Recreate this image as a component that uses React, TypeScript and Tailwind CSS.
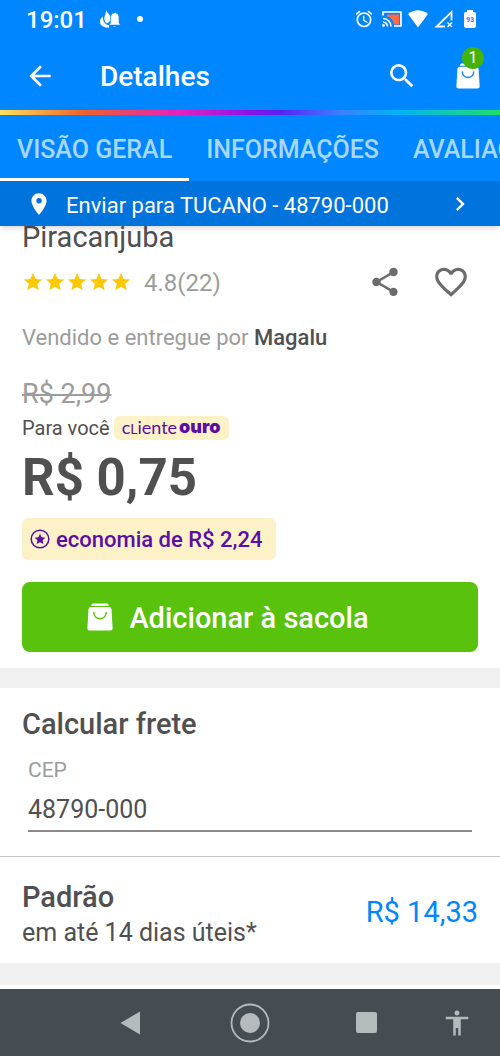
import { useState } from 'react';
import {
  MdAccessibility,
  MdAlarm,
  MdArrowBack,
  MdChevronRight,
  MdFavoriteBorder,
  MdPlace,
  MdSearch,
  MdShare,
  MdStar,
} from 'react-icons/md';

const tabs = ['VISÃO GERAL', 'INFORMAÇÕES', 'AVALIAÇÕES'];

function BagIcon({ className, smile }: { className?: string; smile: string }) {
  return (
    <svg viewBox="0 0 26 28" className={className} aria-hidden="true">
      <path d="M6 0.5h14q1.5 0 2 2.500H4q.5-2.500 2-2.500z" fill="#fff" />
      <path d="M4 4h18q2.300 0 2.500 2.300L25.600 25q.1 2.500-2.400 2.500H2.800Q.3 27.500.400 25L1.500 6.300Q1.700 4 4 4z" fill="#fff" />
      <path d="M6.800 9.500c.6 8.200 11.800 8.200 12.400 0" fill="none" stroke={smile} strokeWidth="1.500" strokeLinecap="round" />
    </svg>
  );
}

function StatusBar() {
  return (
    <div className="flex h-9.5 items-center pr-6 pl-6.5 text-white">
      <span className="pt-0.5 text-2xl font-medium">19:01</span>
      <svg viewBox="0 0 22 20" className="ml-3 h-5 w-5.5" fill="#fff" aria-hidden="true">
        <path d="M7 1c1 3 4.500 4.500 4.500 8 0 3-1.500 4.500-3.800 5.500C5.500 12.500 5 10 5.500 7.500 6.500 5.500 7 3.500 7 1z" />
        <path d="M4 7.500C-.5 10 0 17.500 6.500 18.500l3.500.2v-2.500C6 15.500 3.500 12 4 7.500z" />
        <path
          d="M15.500 4c-3 .4-4 2.500-4 5v5l-1.500 2h11.500l-1.500-2V9c0-2.500-1-4.600-3.200-5 0-1-1.300-1-1.300 0zM14 17h3q-1.500 2-3 0z"
          stroke="#0086ff"
          strokeWidth="0.500"
        />
      </svg>
      <span className="ml-4 size-1.5 rounded-full bg-white" />
      <div className="ml-auto flex items-center">
        <MdAlarm className="size-5" />
        <svg viewBox="0 0 20 17" className="ml-2 h-4.5 w-5" fill="none" aria-hidden="true">
          <path d="M5 4h12v10h-5C11 9 9 7 5 6z" fill="#ff6a45" />
          <path d="M1 5V1.500h18v14h-7M1 8a8 8 0 0 1 8 8M1 11.500A4.500 4.500 0 0 1 5.500 16" stroke="#fff" strokeWidth="1.700" />
          <circle cx="1.500" cy="15" r="1.400" fill="#fff" />
        </svg>
        <svg viewBox="0 0 20 18" className="ml-1.5 h-4.5 w-5" fill="#fff" aria-hidden="true">
          <path d="M0 4Q10-3.500 20 4L10 17.500z" />
        </svg>
        <svg viewBox="0 0 19 18" className="ml-1.5 h-4.5 w-5" fill="none" stroke="#fff" aria-hidden="true">
          <path d="M10.500 16.500H2L17 2v8.500" strokeWidth="1.800" />
          <path d="M13 12.500l4.500 4.500m0-4.500L13 17" strokeWidth="1.500" />
        </svg>
        <span className="ml-2.5 flex flex-col items-center">
          <span className="h-0.5 w-1.5 bg-white" />
          <span className="flex h-4 w-3 items-center justify-center rounded-xs bg-white text-[7px] font-bold text-[#0086ff]">
            93
          </span>
        </span>
      </div>
    </div>
  );
}

function Header() {
  const [active, setActive] = useState(0);

  return (
    <header className="relative z-10 bg-[#0086ff]">
      <StatusBar />
      <div className="flex h-18 items-center pr-5 pl-6 text-white">
        <button type="button" aria-label="Voltar" className="pt-1">
          <MdArrowBack className="size-8" aria-hidden="true" />
        </button>
        <h1 className="ml-11 pt-1.5 text-[28px] font-medium">Detalhes</h1>
        <button type="button" aria-label="Buscar" className="mr-9.5 ml-auto pt-1">
          <MdSearch className="size-8" aria-hidden="true" />
        </button>
        <button type="button" aria-label="Sacola" className="relative pt-1">
          <BagIcon smile="#0086ff" className="h-6.5 w-6" />
          <span className="absolute -top-3 -right-1 flex size-5.5 items-center justify-center rounded-full bg-[#43b30b] text-base">
            1
          </span>
        </button>
      </div>
      <div className="h-1.25 bg-[linear-gradient(90deg,#fce45a_0%,#f0602a_17%,#e81fc0_36%,#8a12e8_50%,#5a20f5_56%,#3a80ff_68%,#00b4f5_80%,#1ee068_100%)]" />
      <nav className="flex h-16.5 overflow-hidden">
        {tabs.map((tab, i) => (
          <button
            key={tab}
            type="button"
            onClick={() => setActive(i)}
            className={`shrink-0 border-b-3 px-4.25 pt-1.5 text-[25px] font-medium whitespace-nowrap text-[#a8d7ff] ${
              i === active ? 'border-white' : 'border-transparent'
            }`}
          >
            {tab}
          </button>
        ))}
      </nav>
      <button
        type="button"
        className="flex h-11.25 w-full items-center bg-[#0073dc] px-6.5 text-[22px] text-white shadow-md"
      >
        <MdPlace className="size-6.5" aria-hidden="true" />
        <span className="ml-3.5 pt-1">Enviar para TUCANO - 48790-000</span>
        <MdChevronRight className="ml-auto size-7" aria-hidden="true" />
      </button>
    </header>
  );
}

function Product() {
  return (
    <section className="px-5.5 pb-4 text-[#505050]">
      <h2 className="text-[29px] leading-5.5">Piracanjuba</h2>
      <div className="mt-4.5 flex h-8 items-center">
        <div className="flex" role="img" aria-label="4.8 de 5 estrelas">
          {[1, 2, 3, 4, 5].map((n) => (
            <MdStar key={n} className="size-5.5 text-[#ffc800]" />
          ))}
        </div>
        <span className="ml-3 pt-0.5 text-2xl text-[#9c9c9c]">4.8(22)</span>
        <button type="button" aria-label="Compartilhar" className="mr-7.5 ml-auto">
          <MdShare className="size-8.5 text-[#6b6b6b]" aria-hidden="true" />
        </button>
        <button type="button" aria-label="Favoritar" className="mr-2">
          <MdFavoriteBorder className="size-9.5 text-[#6b6b6b]" aria-hidden="true" />
        </button>
      </div>
      <p className="mt-6.5 text-[22px] leading-7 text-[#9c9c9c]">
        Vendido e entregue por <strong className="font-medium text-[#505050]">Magalu</strong>
      </p>
      <p className="mt-6.5 text-[27px] leading-8 text-[#9c9c9c]">
        <s className="decoration-2">R$ 2,99</s>
      </p>
      <div className="mt-1.5 flex h-6 items-center text-xl">
        <span>Para você</span>
        <span className="ml-1 flex h-6 items-center rounded-md bg-[#fdf1c8] px-2 pb-0.5 text-[#5a0ea6]">
          <span className="font-['Lato',sans-serif] text-lg">
            c<span className="text-sm uppercase">l</span>iente
          </span>
          <span className="ml-0.5 font-['Inter',sans-serif] text-lg font-black">ouro</span>
        </span>
      </div>
      <p className="mt-2.5 text-[51px] leading-14 font-bold">R$ 0,75</p>
      <p className="mt-3 flex h-10.5 w-fit items-center rounded-md bg-[#fdf1c8] pr-3.5 pl-2 text-[22px] font-medium text-[#5a0ea6]">
        <svg viewBox="0 0 20 20" className="mr-1.5 size-5" aria-hidden="true">
          <circle cx="10" cy="10" r="8.800" fill="none" stroke="currentColor" strokeWidth="1.500" />
          <path
            d="M10 4.800l1.600 3.400 3.700.5-2.700 2.600.7 3.700-3.300-1.800L6.700 15l.7-3.700-2.700-2.600 3.700-.5z"
            fill="currentColor"
          />
        </svg>
        economia de R$ 2,24
      </p>
      <button
        type="button"
        className="mt-5.5 flex h-17.5 w-full items-center justify-center rounded-lg bg-[#58c20c] pr-11 text-[29px] font-medium text-white"
      >
        <BagIcon smile="#58c20c" className="mr-4 h-7 w-6.5" />
        <span className="pt-1">Adicionar à sacola</span>
      </button>
    </section>
  );
}

function Shipping() {
  const [cep, setCep] = useState('48790-000');

  return (
    <section className="text-[#505050]">
      <div className="px-5.5 pt-5">
        <h2 className="text-[29px] leading-8 font-medium">Calcular frete</h2>
        <div className="mt-4 px-1.5">
          <label htmlFor="cep" className="block text-[21px] leading-7 text-[#9c9c9c]">
            CEP
          </label>
          <input
            id="cep"
            value={cep}
            onChange={(e) => setCep(e.target.value)}
            className="h-12 w-full rounded-none border-b-2 border-[#8a8a8a] pt-1 text-[25px] outline-none"
          />
        </div>
      </div>
      <div className="mt-6 flex items-center justify-between border-t border-[#c9c9c9] px-5.5 pt-5.5 pb-3">
        <div>
          <h3 className="text-[29px] leading-9 font-medium">Padrão</h3>
          <p className="text-[25px] leading-9">em até 14 dias úteis*</p>
        </div>
        <span className="pb-1 text-[29px] text-[#0086ff]">R$ 14,33</span>
      </div>
    </section>
  );
}

function SystemNav() {
  return (
    <nav className="flex h-16.75 items-center justify-between bg-[#464d52] pr-8 pl-30 text-[#b5babc]">
      <button type="button" aria-label="Voltar">
        <svg viewBox="0 0 21 24" className="h-6 w-5.25" fill="currentColor" aria-hidden="true">
          <path d="M0.500 12L20 .5v23z" />
        </svg>
      </button>
      <button type="button" aria-label="Início" className="ml-12">
        <svg viewBox="0 0 40 40" className="size-10" fill="currentColor" aria-hidden="true">
          <circle cx="20" cy="20" r="18.500" fill="none" stroke="currentColor" strokeWidth="1.800" />
          <circle cx="20" cy="20" r="10" />
        </svg>
      </button>
      <button type="button" aria-label="Recentes" className="ml-11 size-5.25 rounded-xs bg-[#b5babc]" />
      <button type="button" aria-label="Acessibilidade" className="ml-6">
        <MdAccessibility className="-mr-1 size-7.5" aria-hidden="true" />
      </button>
    </nav>
  );
}

export default function App() {
  return (
    <div className="flex min-h-screen flex-col bg-white font-['Roboto',sans-serif]">
      <Header />
      <main className="flex-1">
        <Product />
        <div className="h-5 bg-[#f0f0f0]" />
        <Shipping />
        <div className="h-5.5 bg-[#f0f0f0]" />
      </main>
      <SystemNav />
    </div>
  );
}
